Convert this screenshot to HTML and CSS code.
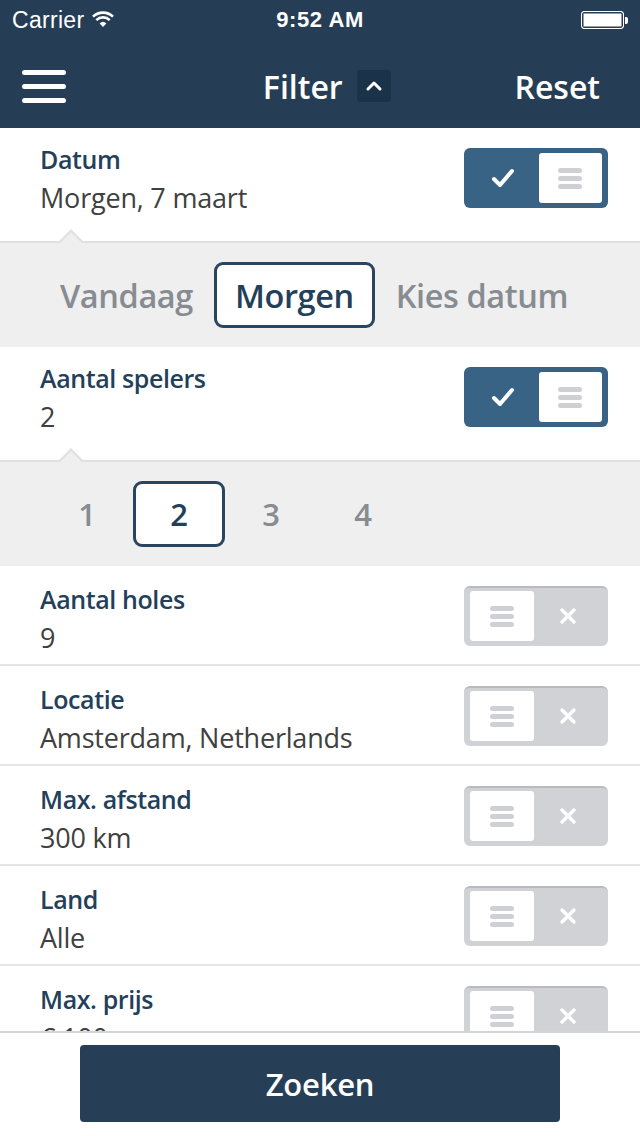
FILE: index.html
```html
<!DOCTYPE html>
<html>
<head>
<meta charset="utf-8">
<link rel="stylesheet" href="styles.css">
</head>
<body>
<div class="app">
  <header class="top">
    <div class="status">
      <div class="carrier">Carrier
        <svg class="wifi" width="22" height="16" viewBox="0 0 22 16"><path d="M11 16 L7.6 12.4 A5 5 0 0 1 14.4 12.4 Z" fill="#fff"/><path d="M4.3 9.1 A9.6 9.6 0 0 1 17.7 9.1" stroke="#fff" stroke-width="2.6" fill="none"/><path d="M1 5.6 A14.5 14.5 0 0 1 21 5.6" stroke="#fff" stroke-width="2.6" fill="none"/></svg>
      </div>
      <div class="time">9:52 AM</div>
      <div class="battery"><span class="batt-body"></span><span class="batt-tip"></span></div>
    </div>
    <nav class="navbar">
      <div class="burger"><span></span><span></span><span></span></div>
      <div class="title">Filter <span class="chev"><svg width="18" height="12" viewBox="0 0 18 12"><path d="M3 9 L9 3 L15 9" stroke="#fff" stroke-width="3" fill="none" stroke-linecap="round" stroke-linejoin="round"/></svg></span></div>
      <div class="reset">Reset</div>
    </nav>
  </header>

  <main class="list">
    <div class="row open">
      <div class="text"><div class="label">Datum</div><div class="value">Morgen, 7 maart</div></div>
      <div class="toggle on"><span class="check"><svg width="24" height="20" viewBox="0 0 24 20"><path d="M3 11 L9 17 L21 3" stroke="#fff" stroke-width="4" fill="none" stroke-linecap="round" stroke-linejoin="round"/></svg></span><span class="knob"><i></i><i></i><i></i></span></div>
    </div>
    <div class="panel">
      <div class="seg">
        <span class="opt">Vandaag</span>
        <span class="opt sel">Morgen</span>
        <span class="opt">Kies datum</span>
      </div>
    </div>

    <div class="row open">
      <div class="text"><div class="label">Aantal spelers</div><div class="value">2</div></div>
      <div class="toggle on"><span class="check"><svg width="24" height="20" viewBox="0 0 24 20"><path d="M3 11 L9 17 L21 3" stroke="#fff" stroke-width="4" fill="none" stroke-linecap="round" stroke-linejoin="round"/></svg></span><span class="knob"><i></i><i></i><i></i></span></div>
    </div>
    <div class="panel">
      <div class="nums">
        <span class="num">1</span>
        <span class="num sel">2</span>
        <span class="num">3</span>
        <span class="num">4</span>
      </div>
    </div>

    <div class="row">
      <div class="text"><div class="label">Aantal holes</div><div class="value">9</div></div>
      <div class="toggle off"><span class="knob"><i></i><i></i><i></i></span><span class="x"><svg width="18" height="18" viewBox="0 0 18 18"><path d="M3 3 L15 15 M15 3 L3 15" stroke="#fff" stroke-width="3.4" stroke-linecap="round"/></svg></span></div>
    </div>
    <div class="row">
      <div class="text"><div class="label">Locatie</div><div class="value">Amsterdam, Netherlands</div></div>
      <div class="toggle off"><span class="knob"><i></i><i></i><i></i></span><span class="x"><svg width="18" height="18" viewBox="0 0 18 18"><path d="M3 3 L15 15 M15 3 L3 15" stroke="#fff" stroke-width="3.4" stroke-linecap="round"/></svg></span></div>
    </div>
    <div class="row">
      <div class="text"><div class="label">Max. afstand</div><div class="value">300 km</div></div>
      <div class="toggle off"><span class="knob"><i></i><i></i><i></i></span><span class="x"><svg width="18" height="18" viewBox="0 0 18 18"><path d="M3 3 L15 15 M15 3 L3 15" stroke="#fff" stroke-width="3.4" stroke-linecap="round"/></svg></span></div>
    </div>
    <div class="row">
      <div class="text"><div class="label">Land</div><div class="value">Alle</div></div>
      <div class="toggle off"><span class="knob"><i></i><i></i><i></i></span><span class="x"><svg width="18" height="18" viewBox="0 0 18 18"><path d="M3 3 L15 15 M15 3 L3 15" stroke="#fff" stroke-width="3.4" stroke-linecap="round"/></svg></span></div>
    </div>
    <div class="row">
      <div class="text"><div class="label">Max. prijs</div><div class="value">€ 100</div></div>
      <div class="toggle off"><span class="knob"><i></i><i></i><i></i></span><span class="x"><svg width="18" height="18" viewBox="0 0 18 18"><path d="M3 3 L15 15 M15 3 L3 15" stroke="#fff" stroke-width="3.4" stroke-linecap="round"/></svg></span></div>
    </div>
  </main>

  <footer class="foot">
    <button class="search">Zoeken</button>
  </footer>
</div>
</body>
</html>
```

FILE: styles.css
```css
* { box-sizing: border-box; margin: 0; padding: 0; }
html, body { width: 640px; height: 1136px; overflow: hidden; }
body { font-family: "Open Sans", "DejaVu Sans", sans-serif; background: #fff; }

.app { display: flex; flex-direction: column; height: 1136px; }

.top { background: #253e56; color: #fff; height: 128px; flex: none; }
.status { height: 40px; display: flex; align-items: center; justify-content: space-between; padding: 0 12px 0 12px; font-family: "Liberation Sans", Arial, sans-serif; }
.carrier { font-size: 23px; display: flex; align-items: center; gap: 8px; width: 160px; letter-spacing: 0.3px; }
.wifi { margin-top: -2px; }
.time { font-size: 22px; font-weight: bold; letter-spacing: 0.6px; }
.battery { width: 160px; display: flex; justify-content: flex-end; align-items: center; }
.batt-body { width: 43px; height: 18px; border: 1.5px solid #fff; border-radius: 3px; background: #fff; box-shadow: inset 0 0 0 1.5px #253e56; }
.batt-tip { width: 3px; height: 7px; background: #fff; border-radius: 0 2px 2px 0; margin-left: 1px; }

.navbar { height: 88px; display: flex; align-items: center; justify-content: space-between; padding: 4px 40px 0 22px; }
.burger { width: 44px; display: flex; flex-direction: column; gap: 9px; }
.burger span { display: block; height: 5px; background: #fff; border-radius: 3px; }
.title { font-size: 32px; font-weight: 600; display: flex; align-items: center; gap: 14px; margin-left: 73px; }
.chev { width: 34px; height: 32px; background: #1a3349; border-radius: 4px; display: flex; align-items: center; justify-content: center; }
.reset { font-size: 32px; font-weight: 600; }

.list { flex: 1; overflow: hidden; }

.row { height: 100px; display: flex; align-items: center; justify-content: space-between; padding: 0 32px 2px 40px; border-bottom: 2px solid #e6e6e6; }
.row .text { margin-top: 10px; }
.row.open { height: 113px; border-bottom: none; padding-bottom: 13px; }
.row.open .text { margin-top: 3px; }
.label { font-size: 25px; font-weight: 600; color: #233f5a; letter-spacing: -0.4px; line-height: 30px; }
.value { font-size: 27px; color: #404040; line-height: 34px; margin-top: 7px; letter-spacing: -0.2px; }

.toggle { width: 144px; height: 60px; border-radius: 6px; display: flex; align-items: center; padding: 5px 6px; }
.toggle.on { background: #386385; justify-content: space-between; }
.toggle.off { background: #d1d2d6; border-top: 2px solid #b9babd; padding-top: 3px; margin-top: 4px; }
.check { width: 70px; display: flex; justify-content: center; align-items: center; padding-right: 2px; }
.knob { width: 64px; height: 50px; background: #fff; border-radius: 3px; display: flex; flex-direction: column; justify-content: center; align-items: center; gap: 3px; }
.knob i { display: block; width: 24px; height: 5px; border-radius: 3px; background: #cfd0d3; }
.x { flex: 1; display: flex; justify-content: center; align-items: center; }

.panel { height: 106px; background: #efefef; border-top: 2px solid #e0e0e0; position: relative; display: flex; align-items: center; }
.panel::before { content: ""; position: absolute; left: 62px; top: -10px; width: 16px; height: 16px; background: #efefef; border-top: 2px solid #e0e0e0; border-left: 2px solid #e0e0e0; transform: rotate(45deg); }

.seg { display: flex; align-items: center; gap: 21px; padding-left: 60px; }
.opt { font-size: 32.5px; font-weight: 600; color: #878c92; letter-spacing: -0.4px; }
.opt.sel { color: #233f5a; background: #fff; border: 3px solid #2a4560; border-radius: 9px; height: 66px; padding: 0 18px; display: flex; align-items: center; }

.nums { display: flex; align-items: center; padding-left: 41px; }
.num { width: 92px; height: 66px; display: flex; align-items: center; justify-content: center; font-size: 31px; font-weight: 600; color: #878c92; }
.num.sel { color: #233f5a; background: #fff; border: 3px solid #2a4560; border-radius: 9px; }

.foot { height: 105px; flex: none; border-top: 2px solid #d4d4d6; display: flex; justify-content: center; padding-top: 12px; background: #fff; }
.search { width: 480px; height: 77px; background: #263f57; color: #fff; border: none; border-radius: 4px; font-family: "Open Sans", sans-serif; font-size: 31px; font-weight: 600; letter-spacing: -0.2px; }
```
